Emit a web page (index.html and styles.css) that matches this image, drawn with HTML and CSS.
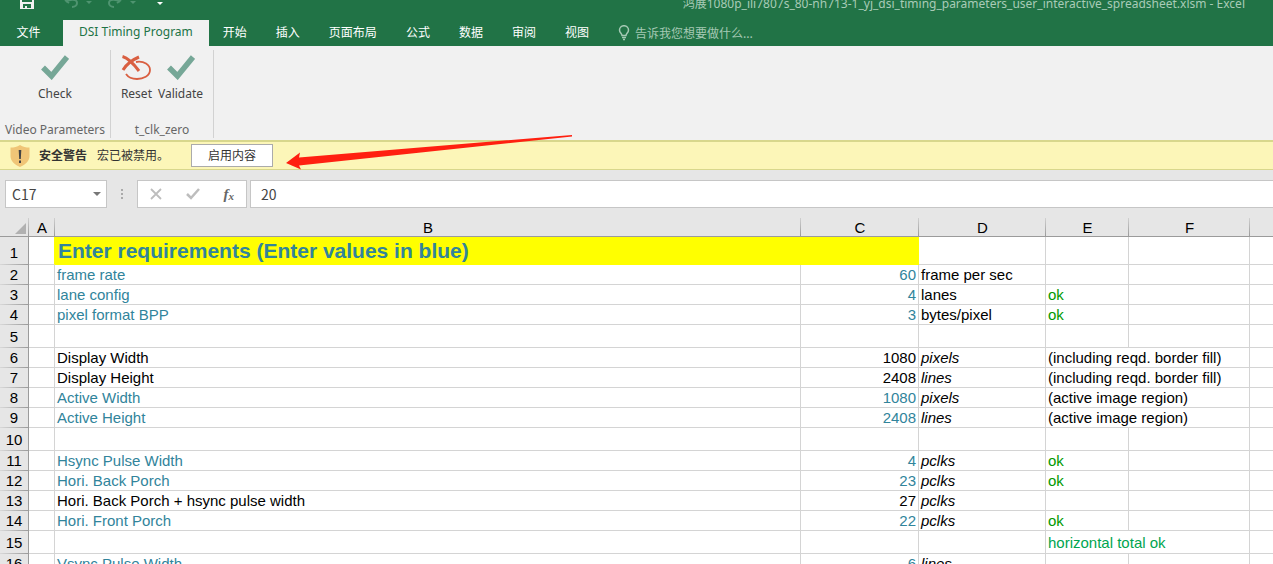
FILE: index.html
```
<!DOCTYPE html>
<html lang="zh-CN">
<head>
<meta charset="utf-8">
<title>鸿展1080p_ili7807s_80-nh713-1_yj_dsi_timing_parameters_user_interactive_spreadsheet.xlsm - Excel</title>
<link rel="stylesheet" href="styles.css">
</head>
<body>
<div class="app">
  <header class="titlebar">
    <div class="quick">
      <button class="plain" aria-label="保存"><svg width="14" height="9" viewBox="0 0 14 9"><path d="M0 0h14v9H0z" fill="#f1f1f1"/><path d="M2 0h10v2H2zM3 4h8v4H3z" fill="#217346"/><path d="M5 6h2v2H5z" fill="#f1f1f1"/></svg></button>
      <button class="plain undo" aria-label="撤消"><svg width="30" height="9" viewBox="0 0 30 9"><path d="M1 0l4 3M2 2C6-1 13-1 13 3c0 2-2 4-5 4" fill="none" stroke="#4f9470" stroke-width="2"/><path d="M22 1h6l-3 3z" fill="#4f9470"/></svg></button>
      <button class="plain redo" aria-label="恢复"><svg width="30" height="9" viewBox="0 0 30 9"><path d="M13 0L9 3M12 2C8-1 1-1 1 3c0 2 2 4 5 4" fill="none" stroke="#4f9470" stroke-width="2"/><path d="M22 1h6l-3 3z" fill="#4f9470"/></svg></button>
      <button class="plain more" aria-label="自定义"><svg width="6" height="6" viewBox="0 0 6 6"><path d="M0 2h6L3 5z" fill="#fff"/></svg></button>
    </div>
    <div class="doc">鸿展1080p_ili7807s_80-nh713-1_yj_dsi_timing_parameters_user_interactive_spreadsheet.xlsm - Excel</div>
  </header>

  <nav class="tabs">
    <button class="tab file">文件</button>
    <button class="tab active">DSI Timing Program</button>
    <button class="tab">开始</button>
    <button class="tab">插入</button>
    <button class="tab">页面布局</button>
    <button class="tab">公式</button>
    <button class="tab">数据</button>
    <button class="tab">审阅</button>
    <button class="tab">视图</button>
    <label class="tell">
      <svg width="12" height="16" viewBox="0 0 12 16" fill="none" stroke="#a5c9b4" stroke-width="1.5"><path d="M4 10.500C4 8.500 1.500 8 1.500 5a4.500 4.300 0 0 1 9 0C10.500 8 8 8.500 8 10.500z"/><path d="M4 12.500h4M5 14.500h2"/></svg>
      <input type="text" placeholder="告诉我您想要做什么..." aria-label="告诉我您想要做什么">
    </label>
  </nav>

  <section class="ribbon">
    <div class="group">
      <div class="tools">
        <button class="tool"><svg width="28" height="26" viewBox="0 0 28 26"><path d="M2 13.500l8.500 8.500L26 3" fill="none" stroke="#76a797" stroke-width="5.500"/></svg>Check</button>
      </div>
      <div class="caption">Video Parameters</div>
    </div>
    <div class="group second">
      <div class="tools">
        <button class="tool"><svg width="30" height="26" viewBox="0 0 30 26"><g fill="none" stroke="#d95f41"><path d="M1.500 2.500C7 4 12 9 18 17" stroke-width="3"/><path d="M18 3C11 6 5 11 2 16" stroke-width="3"/><path d="M15 8C23 6.500 29 11 29 16c0 6-7 9-13 9C11 25 7 23 5 20" stroke-width="1.800"/></g></svg>Reset</button>
        <button class="tool"><svg width="28" height="26" viewBox="0 0 28 26"><path d="M2 13.500l8.500 8.500L26 3" fill="none" stroke="#76a797" stroke-width="5.500"/></svg>Validate</button>
      </div>
      <div class="caption">t_clk_zero</div>
    </div>
  </section>

  <section class="warning">
    <svg width="20" height="22" viewBox="0 0 20 22"><path d="M10 0c3 2 6 2.500 9.500 2.500V11c0 5-4 8.500-9.500 11C4.500 19.500.5 16 .5 11V2.500C4 2.500 7 2 10 0z" fill="#f0c577"/><path d="M8.700 5h2.600l-.5 9H9.200zM9 15.500h2V18H9z" fill="#444"/></svg>
    <strong>安全警告</strong>
    <span>宏已被禁用。</span>
    <button class="enable">启用内容</button>
    <svg class="arrow" width="290" height="38" viewBox="0 0 290 38"><path d="M1 29L15 18.500L14 23.500L287 1v1.500L14 31.500l2 4z" fill="#ff2010"/></svg>
  </section>

  <section class="formula">
    <div class="namebox">
      <input type="text" value="C17" aria-label="名称框">
      <button class="plain" aria-label="展开名称"><svg width="8" height="5" viewBox="0 0 8 5"><path d="M0 0h8L4 4z" fill="#777"/></svg></button>
    </div>
    <svg class="grip" width="4" height="12" viewBox="0 0 4 12"><path d="M1 1h2v2H1zM1 5h2v2H1zM1 9h2v2H1z" fill="#aaa"/></svg>
    <div class="actions">
      <button class="plain" aria-label="取消"><svg width="12" height="12" viewBox="0 0 12 12"><path d="M1 1l10 10M11 1L1 11" stroke="#bdbdbd" stroke-width="1.800"/></svg></button>
      <button class="plain" aria-label="输入"><svg width="14" height="12" viewBox="0 0 14 12"><path d="M1 6l4 4L13 1" fill="none" stroke="#bdbdbd" stroke-width="2.500"/></svg></button>
      <button class="plain fx" aria-label="插入函数">f<small>x</small></button>
    </div>
    <input class="entry" type="text" value="20" aria-label="编辑栏">
  </section>

  <main class="sheet">
    <table class="grid">
      <colgroup><col class="c-row"><col class="c-a"><col class="c-b"><col class="c-c"><col class="c-d"><col class="c-e"><col class="c-f"><col></colgroup>
      <thead><tr>
        <th class="corner"><svg width="11" height="11" viewBox="0 0 11 11"><path d="M11 0v11H0z" fill="#b1b1b1"/></svg></th>
        <th>A</th><th>B</th><th>C</th><th>D</th><th>E</th><th>F</th><th></th>
      </tr></thead>
      <tbody>
        <tr class="head"><th>1</th><td></td><td class="heading" colspan="2">Enter requirements (Enter values in blue)</td><td></td><td></td><td></td><td></td></tr>
        <tr><th>2</th><td></td><td class="in">frame rate</td><td class="num in">60</td><td>frame per sec</td><td></td><td></td><td></td></tr>
        <tr><th>3</th><td></td><td class="in">lane config</td><td class="num in">4</td><td>lanes</td><td class="ok">ok</td><td></td><td></td></tr>
        <tr><th>4</th><td></td><td class="in">pixel format BPP</td><td class="num in">3</td><td>bytes/pixel</td><td class="ok">ok</td><td></td><td></td></tr>
        <tr class="tall"><th>5</th><td></td><td></td><td></td><td></td><td></td><td></td><td></td></tr>
        <tr><th>6</th><td></td><td>Display Width</td><td class="num">1080</td><td class="unit">pixels</td><td colspan="2">(including reqd. border fill)</td><td></td></tr>
        <tr><th>7</th><td></td><td>Display Height</td><td class="num">2408</td><td class="unit">lines</td><td colspan="2">(including reqd. border fill)</td><td></td></tr>
        <tr><th>8</th><td></td><td class="in">Active Width</td><td class="num in">1080</td><td class="unit">pixels</td><td colspan="2">(active image region)</td><td></td></tr>
        <tr><th>9</th><td></td><td class="in">Active Height</td><td class="num in">2408</td><td class="unit">lines</td><td colspan="2">(active image region)</td><td></td></tr>
        <tr class="tall"><th>10</th><td></td><td></td><td></td><td></td><td></td><td></td><td></td></tr>
        <tr><th>11</th><td></td><td class="in">Hsync Pulse Width</td><td class="num in">4</td><td class="unit">pclks</td><td class="ok">ok</td><td></td><td></td></tr>
        <tr><th>12</th><td></td><td class="in">Hori. Back Porch</td><td class="num in">23</td><td class="unit">pclks</td><td class="ok">ok</td><td></td><td></td></tr>
        <tr><th>13</th><td></td><td>Hori. Back Porch + hsync pulse width</td><td class="num">27</td><td class="unit">pclks</td><td></td><td></td><td></td></tr>
        <tr><th>14</th><td></td><td class="in">Hori. Front Porch</td><td class="num in">22</td><td class="unit">pclks</td><td class="ok">ok</td><td></td><td></td></tr>
        <tr class="tall"><th>15</th><td></td><td></td><td></td><td></td><td class="total" colspan="2">horizontal total ok</td><td></td></tr>
        <tr><th>16</th><td></td><td class="in">Vsync Pulse Width</td><td class="num in">6</td><td class="unit">lines</td><td></td><td></td><td></td></tr>
      </tbody>
    </table>
  </main>
</div>
</body>
</html>
```
FILE: styles.css
```
* { box-sizing: border-box; }
body {
  margin: 0;
  background: #fff;
  color: #444;
  font: 12px/16px "Noto Sans", "Noto Sans CJK SC", sans-serif;
}
button, input { font: inherit; color: inherit; border: 0; margin: 0; padding: 0; background: none; }
input { min-width: 0; outline: 0; }
svg { display: block; flex: none; }
.plain { display: flex; align-items: center; justify-content: center; }
.app { height: 100vh; display: flex; flex-direction: column; overflow: hidden; }
.app > * { flex: none; }

.titlebar {
  height: 20px;
  padding: 0 28px 0 20px;
  display: flex;
  align-items: flex-start;
  justify-content: space-between;
  background: #217346;
  color: #a8cbb7;
}
.quick { display: flex; align-items: flex-start; }
.undo { margin-left: 30px; }
.redo { margin-left: 14px; }
.more { margin-left: 19px; }
.doc { line-height: 8px; white-space: nowrap; }

.tabs { display: flex; height: 26px; background: #217346; color: #fff; }
.tab { padding: 0 15px 3px 14px; font-size: 12px; font-family: "Noto Sans CJK SC", sans-serif; }
.tab.file { width: 63px; padding: 0 6px 3px 0; }
.tab.active { background: #f1f1f1; color: #217346; font-family: "Noto Sans", sans-serif; padding: 0 16px 3px; }
.tell { display: flex; align-items: center; gap: 5px; margin-left: 14px; flex: 1; }
.tell input { flex: 1; font-family: "Noto Sans CJK SC", sans-serif; }
.tell input::placeholder { color: #a5c9b4; opacity: 1; }

.ribbon { height: 94px; display: flex; background: #f1f1f1; padding: 4px 0 2px; }
.group { width: 111px; border-right: 1px solid #d2d2d2; display: flex; flex-direction: column; justify-content: space-between; align-items: center; }
.group.second { width: 103px; }
.tools { display: flex; gap: 6px; padding-top: 4px; }
.tool { display: flex; flex-direction: column; align-items: center; gap: 6px; }
.caption { color: #666; white-space: nowrap; }

.warning {
  position: relative;
  height: 30px;
  padding: 0 10px;
  display: flex;
  align-items: center;
  background: #fcf6b8;
  border-top: 2px solid #d8d78c;
  border-bottom: 1px solid #d8d78c;
  font-family: "Noto Sans CJK SC", sans-serif;
  color: #333;
}
.warning strong, .warning span { padding-bottom: 2px; }
.warning strong { margin: 0 10px 0 9px; }
.enable { width: 82px; height: 23px; margin-left: 22px; background: #fff; border: 1px solid #ababab; padding-bottom: 2px; }
.arrow { position: absolute; left: 285px; top: -8px; }

.formula { height: 48px; padding: 10px 0; display: flex; align-items: stretch; background: #e6e6e6; font-size: 14px; }
.formula input { font-family: "Noto Sans CJK SC", sans-serif; }
.namebox, .actions, .entry { background: #fff; border: 1px solid #c6c6c6; }
.namebox { width: 102px; margin-left: 5px; padding: 0 5px 0 6px; display: flex; justify-content: space-between; }
.namebox input { flex: 1; }
.grip { margin: 0 13px; align-self: center; }
.actions { width: 110px; display: flex; justify-content: space-around; align-items: center; }
.fx { font: italic bold 15px/16px "Liberation Serif", serif; color: #666; }
.fx small { font-size: 11px; padding-top: 3px; }
.formula .entry { flex: 1; margin-left: 3px; padding: 0 10px; border-right: 0; }

.app > .sheet { flex: 1; min-height: 0; overflow: hidden; }
.grid { width: 100%; table-layout: fixed; border-collapse: separate; border-spacing: 0; font: 15px/19px "Liberation Sans", Arial, sans-serif; color: #000; }
.c-row { width: 29px; }
.c-a { width: 26px; }
.c-b { width: 746px; }
.c-c { width: 118px; }
.c-d { width: 127px; }
.c-e { width: 83px; }
.c-f { width: 121px; }
.grid th { padding: 0; font-weight: 400; background: #e6e6e6; text-align: center; }
.grid thead th {
  height: 19px;
  line-height: 16px;
  padding-top: 2px;
  border-bottom: 1px solid #9b9b9b;
  background: linear-gradient(#d0d0d0, #9b9b9b) right / 1px 100% no-repeat #e6e6e6;
}
.grid tbody th {
  border-right: 1px solid #9b9b9b;
  background: linear-gradient(90deg, #d8d8d8, #9b9b9b) bottom / 100% 1px no-repeat #e6e6e6;
}
.corner svg { margin: 0 3px 0 auto; }
.grid td { height: 20px; padding: 0 2px; border-right: 1px solid #d4d4d4; border-bottom: 1px solid #d4d4d4; white-space: nowrap; }
.grid td:last-child { border-right: 0; }
.grid thead th:last-child { background: #e6e6e6; }
.grid tbody th { padding-bottom: 1px; }
.grid .tall td { height: 23px; }
.grid .head th { padding-top: 4px; }
.grid .head td { height: 28px; }
.grid td.heading { background: #ff0; border-color: #ff0; padding: 1px 3px 0; font-size: 21px; font-weight: 700; line-height: 26px; color: #31849b; }
.grid .head td:nth-child(2) { border-right-color: #ff0; }
.grid .in { color: #31849b; }
.grid .num { text-align: right; }
.grid .unit { font-style: italic; }
.grid .ok { color: #009900; }
.grid .total { color: #00a550; }
```
